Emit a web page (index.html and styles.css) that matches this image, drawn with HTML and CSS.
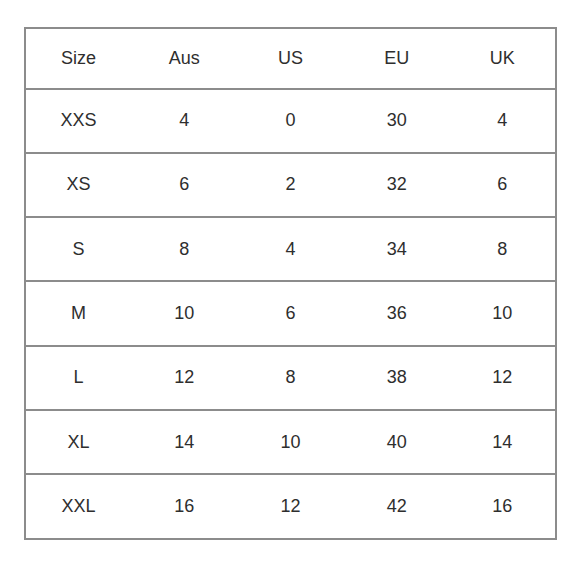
FILE: index.html
```html
<!DOCTYPE html>
<html>
<head>
<meta charset="utf-8">
<link rel="stylesheet" href="styles.css">
</head>
<body>
<table class="size-table">
  <thead>
    <tr><th>Size</th><th>Aus</th><th>US</th><th>EU</th><th>UK</th></tr>
  </thead>
  <tbody>
    <tr><td>XXS</td><td>4</td><td>0</td><td>30</td><td>4</td></tr>
    <tr><td>XS</td><td>6</td><td>2</td><td>32</td><td>6</td></tr>
    <tr><td>S</td><td>8</td><td>4</td><td>34</td><td>8</td></tr>
    <tr><td>M</td><td>10</td><td>6</td><td>36</td><td>10</td></tr>
    <tr><td>L</td><td>12</td><td>8</td><td>38</td><td>12</td></tr>
    <tr><td>XL</td><td>14</td><td>10</td><td>40</td><td>14</td></tr>
    <tr><td>XXL</td><td>16</td><td>12</td><td>42</td><td>16</td></tr>
  </tbody>
</table>
</body>
</html>
```
FILE: styles.css
```css
html, body {
  margin: 0;
  background: #fff;
}
body {
  padding: 27px 24px;
  font-family: "Liberation Sans", Arial, sans-serif;
  color: #2e2e2e;
}
.size-table {
  width: 533px;
  border-collapse: collapse;
  border: 2px solid #8c8c8c;
  table-layout: fixed;
}
.size-table th,
.size-table td {
  font-weight: normal;
  font-size: 18px;
  text-align: center;
  padding: 0;
  border-bottom: 2px solid #8c8c8c;
}
.size-table th {
  height: 58.5px;
}
.size-table td {
  height: 62.3px;
}
```
